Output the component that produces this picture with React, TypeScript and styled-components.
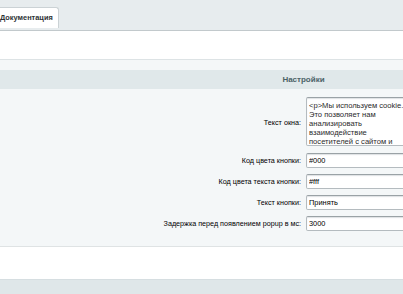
import { Fragment } from "react";
import styled, { createGlobalStyle } from "styled-components";

const GlobalStyle = createGlobalStyle`
  html, body {
    margin: 0;
    padding: 0;
    background: #ffffff;
    overflow: hidden;
  }
  body {
    font-family: "Liberation Sans", Arial, sans-serif;
  }
`;

const Page = styled.div`
  width: 607px;
  height: 294px;
  overflow: hidden;
`;

const TabBar = styled.div`
  display: flex;
  height: 28px;
  padding-top: 7px;
  box-sizing: border-box;
  background: #e7ecee;
`;

const Tab = styled.div`
  margin-left: -10px;
  width: 69px;
  height: 21px;
  box-sizing: border-box;
  padding-left: 9px;
  background: #ffffff;
  border: 1px solid #cbd2d5;
  border-bottom: none;
  border-radius: 3px 3px 0 0;
  font-size: 7.4px;
  font-weight: bold;
  line-height: 20px;
  color: #2e3335;
  white-space: nowrap;
`;

const TabLine = styled.div`
  height: 2px;
  background: #e7ecee;
  border-bottom: 1px solid #c2c9cc;
`;

const Blank = styled.div<{ $h: number }>`
  height: ${(p) => p.$h}px;
  background: #ffffff;
`;

const Section = styled.div`
  border-top: 1px solid #dde3e5;
  border-bottom: 1px solid #dfe3e4;
  background: #f4f7f8;
  padding-top: 10px;
  padding-bottom: 15px;
`;

const Heading = styled.div`
  height: 19px;
  background: #e0e8ea;
  text-align: center;
  font-size: 8px;
  font-weight: bold;
  line-height: 19px;
  color: #4b6267;
`;

const Form = styled.div`
  display: grid;
  grid-template-columns: 1fr 1fr;
  column-gap: 5px;
  row-gap: 6px;
  padding-top: 8px;
`;

const Label = styled.label`
  display: flex;
  align-items: center;
  justify-content: flex-end;
  font-size: 7.2px;
  color: #000000;
  white-space: nowrap;
`;

const Cell = styled.div<{ $extra?: number }>`
  display: flex;
  align-items: flex-start;
  padding-bottom: ${(p) => p.$extra ?? 0}px;
`;

const Field = styled.input`
  display: block;
  width: 200px;
  height: 15px;
  margin: 0;
  box-sizing: border-box;
  padding: 0 2px;
  border: 1px solid #b4bbbf;
  border-top-color: #9aa2a6;
  border-radius: 2px;
  background: #ffffff;
  box-shadow: inset 0 1px 1px rgba(160, 170, 175, 0.35);
  font-family: "Liberation Sans", Arial, sans-serif;
  font-size: 7.4px;
  color: #000000;
  outline: none;
`;

const Area = styled.textarea`
  display: block;
  width: 110px;
  height: 49px;
  margin: 0;
  box-sizing: border-box;
  padding: 3px 2px 2px;
  border: 1px solid #b4bbbf;
  border-top-color: #9aa2a6;
  border-radius: 2px;
  background: #ffffff;
  box-shadow: inset 0 1px 1px rgba(160, 170, 175, 0.35);
  font-family: "Liberation Sans", Arial, sans-serif;
  font-size: 7.6px;
  line-height: 9px;
  color: #2a2a2a;
  resize: none;
  overflow: hidden;
  outline: none;
`;

const BottomBand = styled.div`
  height: 20px;
  background: #dfe7e9;
  border-top: 1px solid #d6dee1;
`;

const fields = [
  { label: "Код цвета кнопки:", value: "#000" },
  { label: "Код цвета текста кнопки:", value: "#fff" },
  { label: "Текст кнопки:", value: "Принять" },
  { label: "Задержка перед появлением popup в мс:", value: "3000" },
];

export default function App() {
  return (
    <>
      <GlobalStyle />
      <Page>
        <TabBar>
          <Tab>Документация</Tab>
        </TabBar>
        <TabLine />
        <Blank $h={28} />
        <Section>
          <Heading>Настройки</Heading>
          <Form>
            <Label>Текст окна:</Label>
            <Cell $extra={1}>
              <Area
                readOnly
                value="<p>Мы используем cookie. Это позволяет нам анализировать взаимодействие посетителей с сайтом и делать его лучше.</p>"
              />
            </Cell>
            {fields.map((f) => (
              <Fragment key={f.label}>
                <Label>{f.label}</Label>
                <Cell>
                  <Field readOnly value={f.value} />
                </Cell>
              </Fragment>
            ))}
          </Form>
        </Section>
        <Blank $h={32} />
        <BottomBand />
      </Page>
    </>
  );
}
